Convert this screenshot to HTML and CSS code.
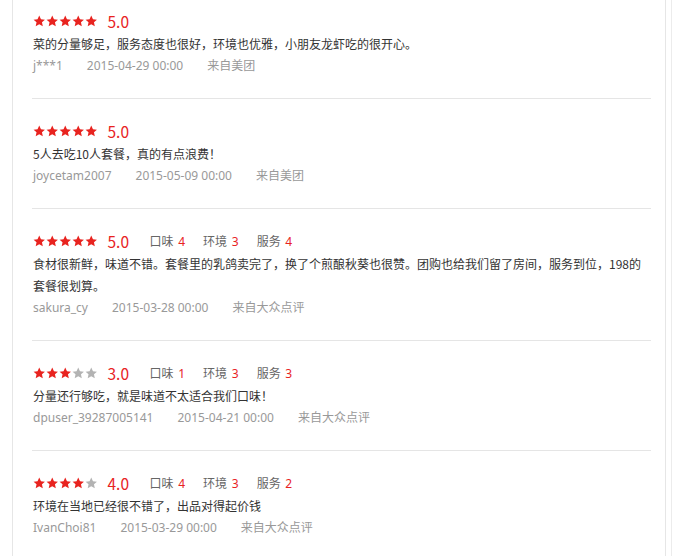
FILE: index.html
```html
<!DOCTYPE html>
<html lang="zh-CN">
<head>
<meta charset="utf-8">
<title>评价</title>
<link rel="stylesheet" href="styles.css">
</head>
<body>
<svg class="defs" width="0" height="0" aria-hidden="true">
  <defs>
    <symbol id="star" viewBox="0 0 24 24">
      <path d="M12 1l3.3 7 7.6.9-5.7 5.2 1.6 7.5L12 17.8l-6.8 3.8 1.6-7.5L1.1 8.9l7.6-.9z"/>
    </symbol>
  </defs>
</svg>
<div class="frame">
  <div class="panel">
    <ul class="reviews">
      <li class="review">
        <div class="rating">
          <span class="stars"><svg class="on"><use href="#star"/></svg><svg class="on"><use href="#star"/></svg><svg class="on"><use href="#star"/></svg><svg class="on"><use href="#star"/></svg><svg class="on"><use href="#star"/></svg></span>
          <span class="score">5.0</span>
        </div>
        <p class="text">菜的分量够足，服务态度也很好，环境也优雅，小朋友龙虾吃的很开心。</p>
        <div class="meta"><span>j***1</span><span>2015-04-29 00:00</span><span>来自美团</span></div>
      </li>
      <li class="review">
        <div class="rating">
          <span class="stars"><svg class="on"><use href="#star"/></svg><svg class="on"><use href="#star"/></svg><svg class="on"><use href="#star"/></svg><svg class="on"><use href="#star"/></svg><svg class="on"><use href="#star"/></svg></span>
          <span class="score">5.0</span>
        </div>
        <p class="text">5人去吃10人套餐，真的有点浪费！</p>
        <div class="meta"><span>joycetam2007</span><span>2015-05-09 00:00</span><span>来自美团</span></div>
      </li>
      <li class="review">
        <div class="rating">
          <span class="stars"><svg class="on"><use href="#star"/></svg><svg class="on"><use href="#star"/></svg><svg class="on"><use href="#star"/></svg><svg class="on"><use href="#star"/></svg><svg class="on"><use href="#star"/></svg></span>
          <span class="score">5.0</span>
          <span class="sub">口味 <em>4</em></span><span class="sub">环境 <em>3</em></span><span class="sub">服务 <em>4</em></span>
        </div>
        <p class="text">食材很新鲜，味道不错。套餐里的乳鸽卖完了，换了个煎酿秋葵也很赞。团购也给我们留了房间，服务到位，198的套餐很划算。</p>
        <div class="meta"><span>sakura_cy</span><span>2015-03-28 00:00</span><span>来自大众点评</span></div>
      </li>
      <li class="review">
        <div class="rating">
          <span class="stars"><svg class="on"><use href="#star"/></svg><svg class="on"><use href="#star"/></svg><svg class="on"><use href="#star"/></svg><svg class="off"><use href="#star"/></svg><svg class="off"><use href="#star"/></svg></span>
          <span class="score">3.0</span>
          <span class="sub">口味 <em>1</em></span><span class="sub">环境 <em>3</em></span><span class="sub">服务 <em>3</em></span>
        </div>
        <p class="text">分量还行够吃，就是味道不太适合我们口味！</p>
        <div class="meta"><span>dpuser_39287005141</span><span>2015-04-21 00:00</span><span>来自大众点评</span></div>
      </li>
      <li class="review">
        <div class="rating">
          <span class="stars"><svg class="on"><use href="#star"/></svg><svg class="on"><use href="#star"/></svg><svg class="on"><use href="#star"/></svg><svg class="on"><use href="#star"/></svg><svg class="off"><use href="#star"/></svg></span>
          <span class="score">4.0</span>
          <span class="sub">口味 <em>4</em></span><span class="sub">环境 <em>3</em></span><span class="sub">服务 <em>2</em></span>
        </div>
        <p class="text">环境在当地已经很不错了，出品对得起价钱</p>
        <div class="meta"><span>IvanChoi81</span><span>2015-03-29 00:00</span><span>来自大众点评</span></div>
      </li>
    </ul>
  </div>
</div>
</body>
</html>
```
FILE: styles.css
```css
html, body {
  margin: 0;
  padding: 0;
  background: #fff;
  height: 100%;
  overflow: hidden;
}
body {
  font-family: "Noto Sans", "Noto Sans CJK SC", sans-serif;
  font-size: 12px;
  color: #333;
}
.defs {
  position: absolute;
  width: 0;
  height: 0;
}
.frame {
  width: 671px;
  height: 100%;
  border-right: 1px solid #ececec;
}
.panel {
  margin-left: 12px;
  width: 654px;
  height: 100%;
  border-left: 1px solid #e6e6e6;
  border-right: 1px solid #e6e6e6;
  padding: 0 14px 0 19px;
  box-sizing: border-box;
}
.reviews {
  list-style: none;
  margin: 0;
  padding: 0;
}
.review {
  padding: 21px 0 21px;
  border-bottom: 1px solid #e5e5e5;
}
.review:first-child {
  padding-top: 10px;
}
.rating {
  display: flex;
  align-items: center;
  height: 22px;
  padding-left: 1px;
}
.stars {
  display: flex;
  gap: 0.5px;
}
.stars svg {
  width: 12.5px;
  height: 12.5px;
}
.stars .on { fill: #e8231f; }
.stars .off { fill: #b3b3b3; }
.score {
  margin-left: 10px;
  font-family: "Noto Sans CJK SC", sans-serif;
  font-size: 15.5px;
  color: #e8231f;
  width: 42px;
}
.sub {
  color: #666;
  margin-right: 18px;
  font-family: "Noto Sans CJK SC", sans-serif;
}
.sub em {
  font-style: normal;
  color: #e8231f;
  margin-left: 2px;
  font-family: "Noto Sans", sans-serif;
}
.text {
  margin: 0;
  line-height: 22px;
  padding-left: 1px;
  padding-top: 1px;
  font-family: "Noto Sans CJK SC", sans-serif;
}
.meta {
  display: flex;
  line-height: 22px;
  color: #999;
  padding-left: 1px;
}
.meta span {
  margin-right: 24px;
}
```
